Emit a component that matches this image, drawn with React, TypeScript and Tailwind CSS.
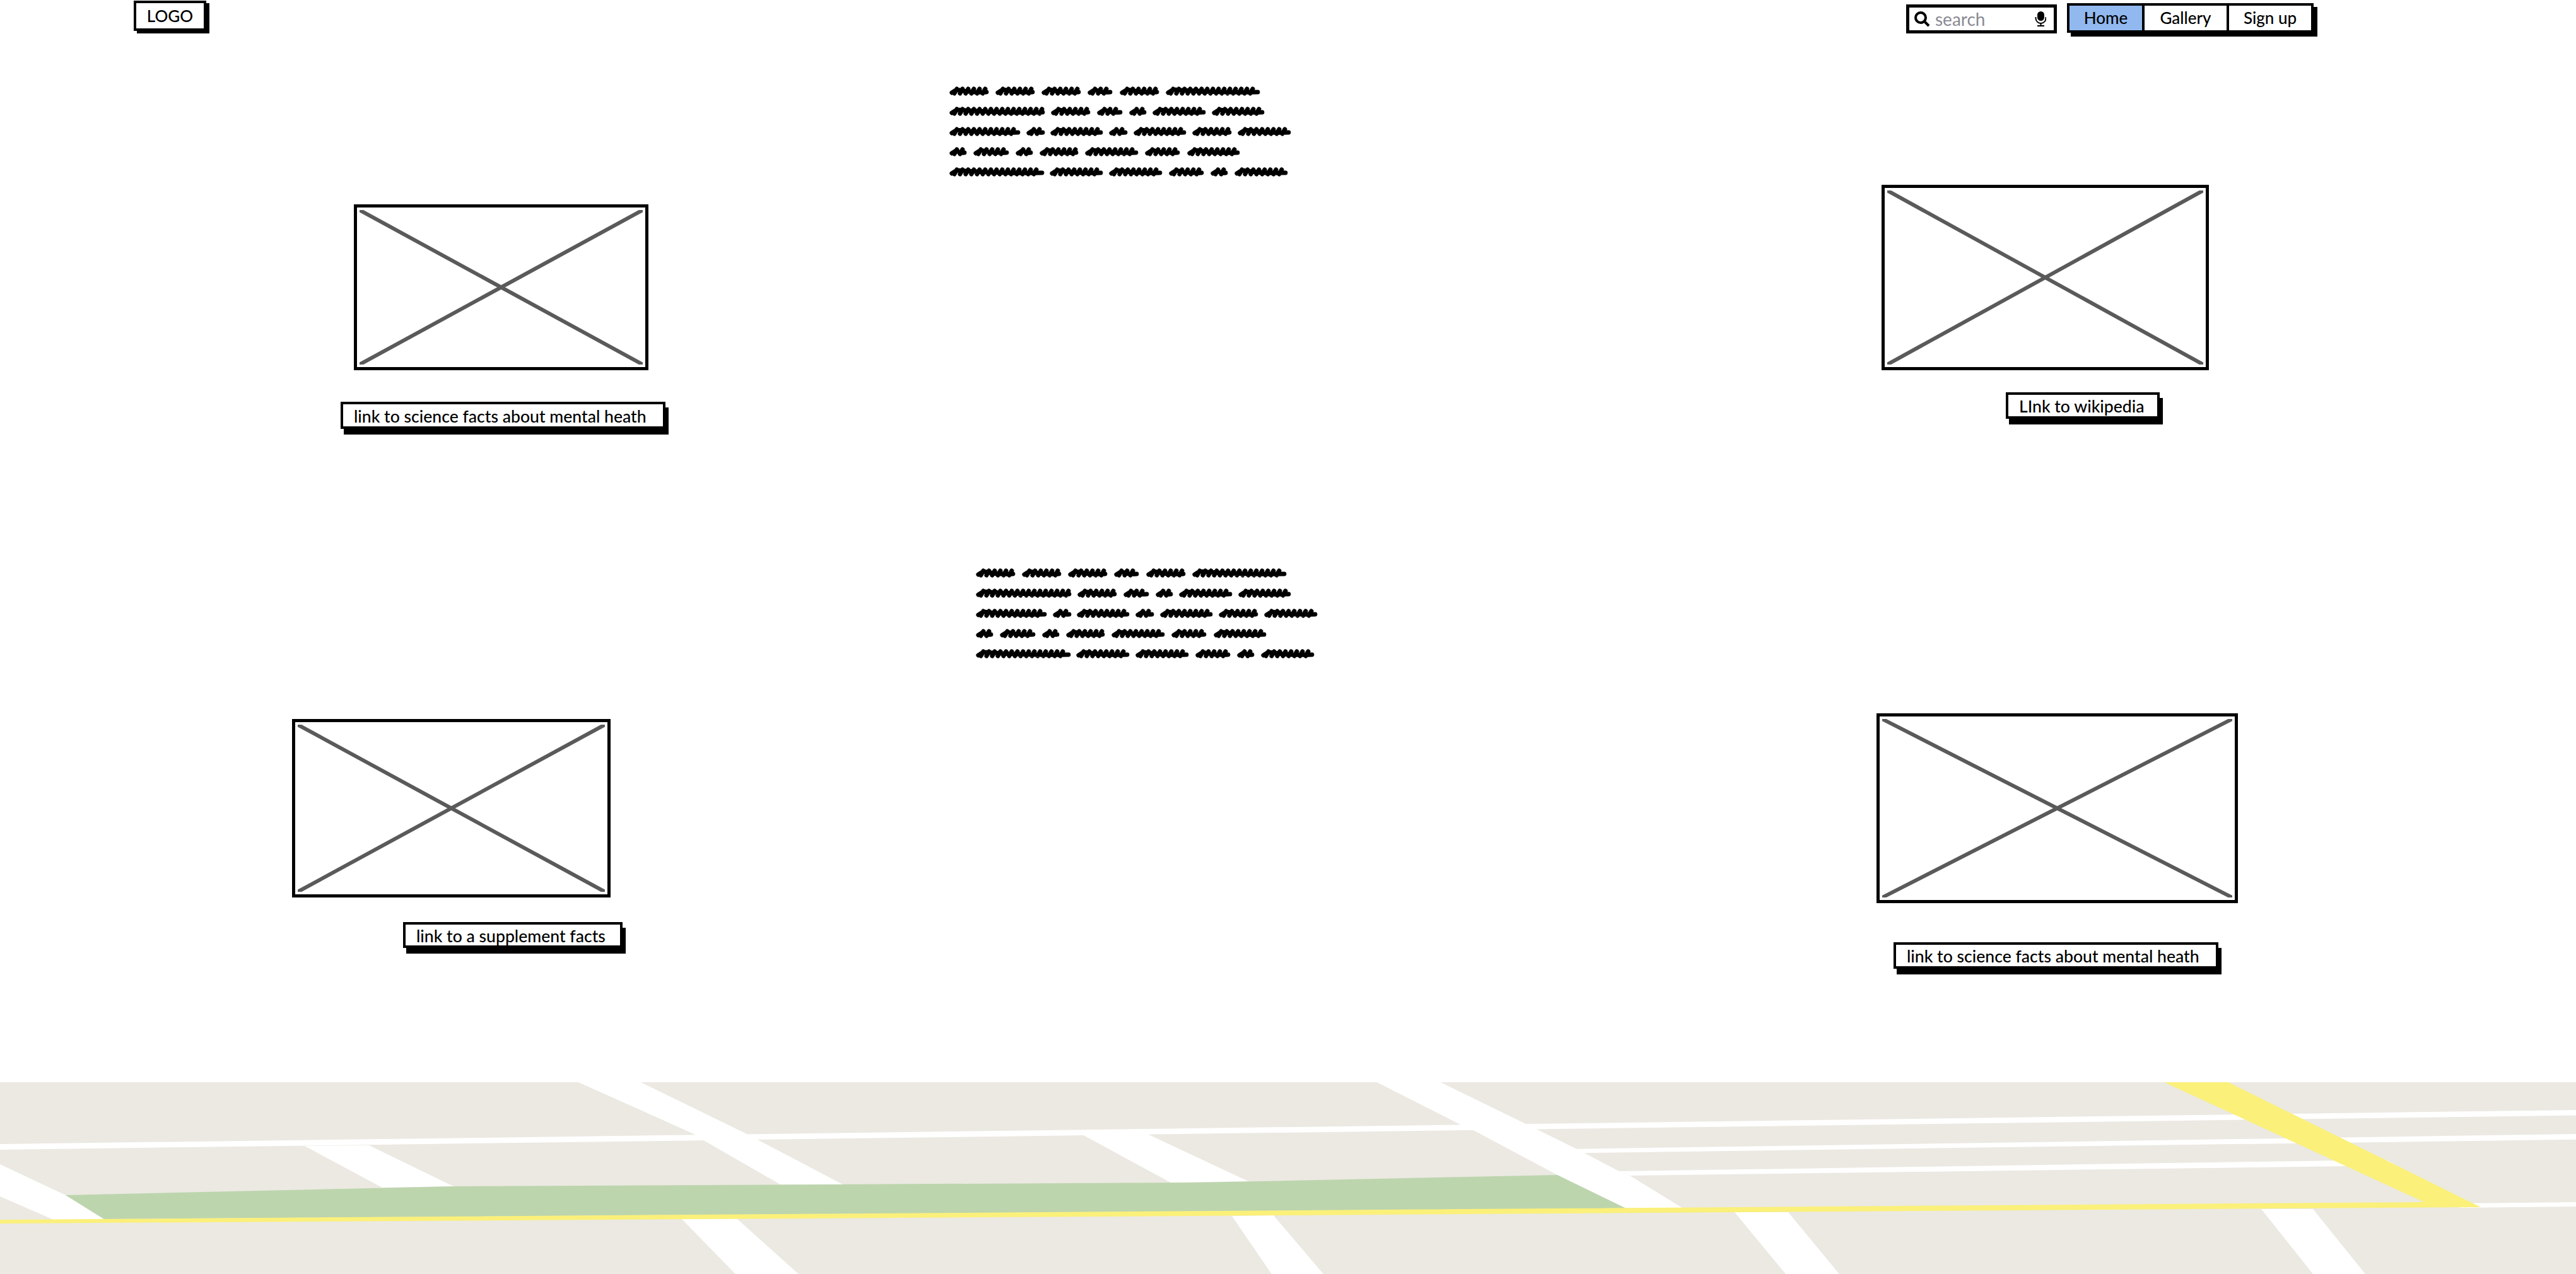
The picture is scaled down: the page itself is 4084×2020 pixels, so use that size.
import React from "react";

const scribbleLines = [
  [[0, 63], [73, 136], [146, 209], [219, 259], [270, 333], [343, 493]],
  [[0, 152], [161, 224], [234, 275], [285, 313], [322, 407], [416, 500]],
  [[0, 113], [122, 152], [160, 244], [253, 283], [292, 376], [385, 448], [457, 542]],
  [[0, 28], [38, 95], [105, 133], [143, 205], [215, 300], [310, 366], [377, 461]],
  [[0, 151], [159, 244], [253, 338], [348, 404], [414, 442], [452, 537]],
];

function wordPath(start: number, end: number, y: number) {
  let d = `M${start + 4} ${y + 3}L${start + 12} ${y - 2}Q${(start + end) / 2} ${y + 3} ${end - 4} ${y + 2}`;
  for (let x = start + 8; x < end - 8; x += 9) {
    d += `M${x} ${y + 4}L${x + 4} ${y - 3}`;
  }
  return d;
}

const Scribble = () => (
  <svg width="545" height="160" viewBox="0 0 545 160" className="block">
    {scribbleLines.map((words, i) =>
      words.map(([start, end]) => (
        <path
          key={`${i}-${start}`}
          d={wordPath(start, end, 13 + i * 32)}
          fill="none"
          stroke="#000"
          strokeWidth="7"
          strokeLinecap="round"
          strokeLinejoin="round"
        />
      ))
    )}
  </svg>
);

type CardProps = {
  boxClass: string;
  buttonClass: string;
  label: string;
};

const Card = ({ boxClass, buttonClass, label }: CardProps) => (
  <div>
    <div className={`border-[5px] border-black bg-white p-[4px] ${boxClass}`}>
      <svg viewBox="0 0 100 100" preserveAspectRatio="none" className="block w-full h-full">
        <line x1="0" y1="0" x2="100" y2="100" stroke="#5a5a5a" strokeWidth="6" vectorEffect="non-scaling-stroke" />
        <line x1="100" y1="0" x2="0" y2="100" stroke="#5a5a5a" strokeWidth="6" vectorEffect="non-scaling-stroke" />
      </svg>
    </div>
    <div
      className={`flex items-center border-4 border-black bg-white pl-[17px] pt-[4px] shadow-[5px_9px_0_#000] text-[26.6px] font-medium text-black whitespace-nowrap font-['Lato',sans-serif] ${buttonClass}`}
    >
      {label}
    </div>
  </div>
);

const MapStrip = () => (
  <svg viewBox="0 1716 4084 304" className="block w-full h-[304px] mt-auto">
    <rect x="0" y="1716" width="4084" height="304" fill="#ebe9e2" />
    <g fill="#fff">
      <polygon points="0,1814 4084,1760 4084,1768.5 0,1823" />
      <polygon points="2500,1821.7 4084,1798 4084,1806.7 2500,1828.3" />
      <polygon points="2567,1857 3783,1839 3800,1848 2584,1864" />
      <polygon points="3900,1908 4084,1906 4084,1913 3900,1915" />
      <polygon points="917,1716 1016,1716 1182,1797 1199,1806 1336,1878 1237,1878 1117,1809 1100,1798" />
      <polygon points="483,1817 585,1816 719,1881 606,1883" />
      <polygon points="1716,1799 1817,1797 1979,1873 1856,1875" />
      <polygon points="0,1846 104,1895 165,1933 85,1934 0,1897" />
      <polygon points="1081,1933 1168,1932 1266,2020 1166,2020" />
      <polygon points="1953,1928 2019,1927 2098,2020 2016,2020" />
      <polygon points="2183,1716 2284,1716 2417,1781 2500,1822 2567,1857 2584,1864 2667,1915 2578,1916 2469,1863 2334,1791 2313,1782" />
      <polygon points="2750,1922 2835,1922 2916,2020 2831,2020" />
      <polygon points="3585,1917 3667,1917 3750,2020 3667,2020" />
    </g>
    <polygon
      points="104,1895 719,1881 1891,1875 2042,1872 2469,1863 2578,1916 165,1933"
      fill="#bdd5ad"
    />
    <polygon
      points="0,1934 3843,1906 3431,1716 3533,1716 3933,1914 2042,1927 0,1940"
      fill="#fbf07a"
    />
  </svg>
);

export default function App() {
  return (
    <div className="flex flex-col w-[4084px] h-[2020px] bg-white overflow-hidden font-['Lato',sans-serif] text-black">
      <header className="flex items-start h-[131px] pl-[212px] pr-[416px]">
        <div className="flex items-center justify-center w-[115px] h-[48px] mt-px border-4 border-black bg-white shadow-[5px_4px_0_#000] text-[26px] font-medium">
          LOGO
        </div>
        <div className="flex items-center w-[239px] h-[46px] mt-[7px] ml-auto border-[5px] border-black bg-white pl-[7px] pr-[12px]">
          <svg width="26" height="26" viewBox="0 0 26 26" className="shrink-0">
            <circle cx="11" cy="11" r="8" fill="none" stroke="#000" strokeWidth="4" />
            <line x1="17" y1="17" x2="24" y2="24" stroke="#000" strokeWidth="4" />
          </svg>
          <span className="ml-[8px] text-[28px] leading-none text-[#8a8a94]">search</span>
          <svg width="18" height="24" viewBox="0 0 18 24" className="ml-auto shrink-0">
            <rect x="4" y="0" width="11" height="15" rx="5.5" fill="#000" />
            <path d="M1.5 9v2a8 8 0 0 0 16 0V9" fill="none" stroke="#000" strokeWidth="2" />
            <path d="M9.5 19v4M4 23h11" fill="none" stroke="#000" strokeWidth="2" />
          </svg>
        </div>
        <nav className="flex w-[391px] h-[47px] mt-[5px] ml-[16px] border-4 border-black bg-white shadow-[6px_6px_0_#000] text-[26px] font-medium">
          <div className="flex items-center justify-center w-[119px] bg-[#91b9f0] border-r-4 border-black">Home</div>
          <div className="flex items-center justify-center w-[134px] border-r-4 border-black">Gallery</div>
          <div className="flex items-center justify-center flex-1">Sign up</div>
        </nav>
      </header>

      <section className="grid grid-cols-[1505px_1478px_1fr] h-[764px]">
        <div className="pl-[561px] pt-[193px]">
          <Card
            boxClass="w-[467px] h-[263px]"
            buttonClass="w-[515px] h-[43px] -ml-[21px] mt-[50px]"
            label="link to science facts about mental heath"
          />
        </div>
        <Scribble />
        <div className="pt-[162px]">
          <Card
            boxClass="w-[519px] h-[294px]"
            buttonClass="w-[244px] h-[42px] ml-[197px] mt-[35px]"
            label="LInk to wikipedia"
          />
        </div>
      </section>

      <section className="grid grid-cols-[1547px_1428px_1fr]">
        <div className="pl-[463px] pt-[245px]">
          <Card
            boxClass="w-[505px] h-[283px]"
            buttonClass="w-[348px] h-[41px] ml-[176px] mt-[39px]"
            label="link to a supplement facts"
          />
        </div>
        <Scribble />
        <div className="pt-[236px]">
          <Card
            boxClass="w-[573px] h-[301px]"
            buttonClass="w-[515px] h-[42px] ml-[27px] mt-[62px]"
            label="link to science facts about mental heath"
          />
        </div>
      </section>

      <MapStrip />
    </div>
  );
}
